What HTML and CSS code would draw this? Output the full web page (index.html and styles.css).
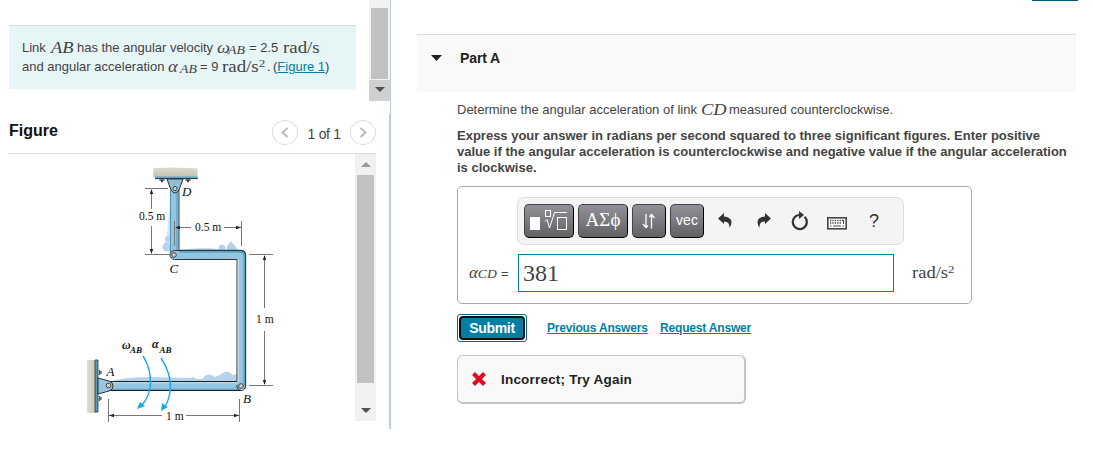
FILE: index.html
```html
<!DOCTYPE html>
<html lang="en">
<head>
<meta charset="utf-8">
<title>Part A</title>
<link rel="stylesheet" href="styles.css">
</head>
<body>
<div class="app">
  <aside class="left">
    <section class="problem">
      <div class="prompt">
        <div class="line"><span class="w29">Link</span><span class="math w26">AB</span><span class="w140">has the angular velocity</span><span class="math w10">ω</span><span class="math sub w22">AB</span><span class="w34">= 2.5</span><span class="rad">rad/s</span></div>
        <div class="line"><span class="w146">and angular acceleration</span><span class="math w12">α</span><span class="math sub w20">AB</span><span class="w22b">= 9</span><span class="rad w45">rad/s<sup>2</sup></span><span class="w6">.</span><span>(<a href="#">Figure 1</a>)</span></div>
      </div>
      <div class="bar bar-top"><div class="thumb"></div><div class="arrow"><svg width="10" height="5"><path d="M0 0H10L5 5Z" fill="#505050"/></svg></div></div>
    </section>
    <section class="figure">
      <header class="fighead">
        <h2>Figure</h2>
        <button class="round"><svg width="10" height="12"><path d="M7.500 1L2.500 5.500L7.500 10" fill="none" stroke="#bbb" stroke-width="2"/></svg></button>
        <span class="count">1 of 1</span>
        <button class="round"><svg width="10" height="12"><path d="M2.500 1L7.500 5.500L2.500 10" fill="none" stroke="#bbb" stroke-width="2"/></svg></button>
      </header>
      <div class="figbody">
        <svg class="diagram" width="346" height="275" viewBox="9 154 346 275">
          <defs>
            <linearGradient id="wall" x1="0" x2="0" y1="0" y2="1"><stop offset="0" stop-color="#dedccf"/><stop offset="1" stop-color="#c4c2b2"/></linearGradient>
            <linearGradient id="wall2"><stop offset="0" stop-color="#e0ded2"/><stop offset="1" stop-color="#c8c6b7"/></linearGradient>
          </defs>
          <g fill="#b5d3ef">
            <path d="M171 190L167 235Q166 241 163 248Q162 251 171 252Z" opacity=".6"/>
            <circle cx="168" cy="239" r="3"/><circle cx="167" cy="247" r="4.500"/>
            <path d="M180 250Q201 247 218 249L219 251H180Z"/><circle cx="222" cy="248" r="3.300"/><path d="M226 251L227 246L231 241L236 247L238 251Z"/>
            <path d="M112 381Q125 377 150 377L190 378L194 377L196 379L202 379Q208 371 215 377L220 375Q227 368 233 375L237 374V381Z"/>
          </g>
          <path d="M153.500 168Q175 167 197.500 168.500V177H153Z" fill="url(#wall)"/>
          <rect x="155" y="176.500" width="42.500" height="2.500" fill="#5ba9cb"/><path d="M155 178.600H198" stroke="#333"/>
          <path d="M159.500 180H164.500M161 181.500H163M185.500 180H190.500M187 181.500H189" stroke="#444" stroke-width="1.500"/>
          <path d="M170.500 190V255H179V190Z" fill="#95c5df"/><path d="M170.500 190V253M177 190V251" stroke="#4f94b4"/><path d="M179 190V251" stroke="#344d59"/>
          <path d="M167 179L171 190Q175 196 179 190L183 179Z" fill="#8fbfd9" stroke="#333"/>
          <path d="M175 250.500H241Q245.500 251 245.500 255V389H237.500V259.500H175A4.300 4.300 0 0 1 175 250.500Z" fill="#95c5df"/>
          <path d="M179 250.500H241Q245.500 251 245.500 255V386" fill="none" stroke="#263f49" stroke-width="1.300"/>
          <path d="M179 252H240Q244 252 244 256V386" fill="none" stroke="#36a0c0"/>
          <path d="M175 259.500H237V387" fill="none" stroke="#333"/>
          <path d="M238.300 260V385" stroke="#d6e7f1"/>
          <rect x="109" y="381" width="132" height="9" fill="#95c5df"/><path d="M109 381.500H237M109 390.500H241" stroke="#222" stroke-width="1.200"/><path d="M109 382.800H237" stroke="#c6e0ee"/><path d="M112 389.300H238" stroke="#4d9ab9"/>
          <rect x="87" y="360" width="8.500" height="53" fill="url(#wall2)"/>
          <path d="M95 360H98V412H95Z" fill="#4e9ec0" stroke="#333" stroke-width=".8"/>
          <path d="M98 378L109 381Q113 382 113 386Q113 390 109 391L98 394Z" fill="#95c5df" stroke="#333"/>
          <path d="M99.500 370V375M101 371V374M99.500 396V401M101 397V400" stroke="#555" stroke-width="1.300"/>
          <path d="M179 250.500H174.500A4.500 4.500 0 0 0 174.500 259.500M237 385V387Q238 390.500 241 390.500Q245.500 390 245.500 386" fill="none" stroke="#333"/>
          <g fill="#d2d2d2" stroke="#444"><circle cx="175" cy="188.500" r="2.100"/><circle cx="174" cy="255" r="2.300"/><circle cx="108.500" cy="385.500" r="2.300"/><circle cx="241" cy="386" r="2.300"/></g>
          <g stroke="#777" fill="none"><path d="M145 188.500H168M145 254.500H170M151.500 190V209M151.500 226V253M174.500 221V246M176 227.500H191M224 227.500H241M241.500 221V246M249 254.500H273M264.500 256V308M264.500 331V384M249 385.500H273M108.500 399V422M239.500 399V422M109 415.500H162M186 415.500H239"/></g>
          <g fill="#222"><path d="M151.500 189L149.800 194H153.200ZM151.500 254L149.800 249H153.200ZM175 227.500L180 225.800V229.200ZM241 227.500L236 225.800V229.200ZM264.500 255L262.800 260H266.200ZM264.500 385L262.800 380H266.200ZM109 415.500L114 413.800V417.200ZM239 415.500L234 413.800V417.200Z"/></g>
          <g fill="none" stroke="#14aae5" stroke-width="1.400"><path d="M143 356Q151 368 150.500 385Q149 398 141 406"/><path d="M161 358Q171 373 170.500 389Q169 401 164 408"/></g>
          <path d="M137 409L140 402L145 406ZM161 411L162 403L168 407Z" fill="#14aae5"/>
          <g class="dlabel"><text x="139" y="220">0.5 m</text><text x="195" y="231">0.5 m</text><text x="256" y="323">1 m</text><text x="166" y="419.500">1 m</text></g>
          <g class="dital"><text x="182" y="196">D</text><text x="169.500" y="272.500">C</text><text x="106.500" y="375.500">A</text><text x="243" y="402.500">B</text><text class="bold" x="122" y="349">ω</text><text class="bold" x="152" y="348">α</text><text class="dsub" x="130" y="352.500">AB</text><text class="dsub" x="159.500" y="352.500">AB</text></g>
        </svg>
        <div class="bar bar-fig"><div class="arrow up"><svg width="10" height="5"><path d="M0 5H10L5 0Z" fill="#9a9a9a"/></svg></div><div class="thumb"></div><div class="arrow down"><svg width="10" height="5"><path d="M0 0H10L5 5Z" fill="#505050"/></svg></div></div>
      </div>
    </section>
  </aside>
  <main class="right">
    <div class="toplink"></div>
    <header class="part"><svg width="11" height="6"><path d="M0 0H11L5.500 6Z" fill="#222"/></svg><h2>Part A</h2></header>
    <div class="content">
      <p class="question"><span class="w243">Determine the angular acceleration of link</span><span class="math w29b">CD</span><span>measured counterclockwise.</span></p>
      <p class="instruct">Express your answer in radians per second squared to three significant figures. Enter positive<br>value if the angular acceleration is counterclockwise and negative value if the angular acceleration<br>is clockwise.</p>
      <div class="answer">
        <div class="tools">
          <button class="tool wide"><svg width="38" height="24"><rect x="0" y="8" width="10" height="13" fill="#fff"/><g fill="none" stroke="#fff"><rect x="15.500" y="1.500" width="5" height="6"/><path d="M15 12.500L17 10.500L19.500 19L24.500 3.500H37"/><rect x="27.500" y="8.500" width="9" height="12"/></g></svg></button>
          <button class="tool wide greek">ΑΣϕ</button>
          <button class="tool"><svg width="14" height="18"><path d="M4 2V15M1 12L4 15.500L6 13.500M9.500 16.500V3M7.500 5L9.500 2.500L12.500 6" fill="none" stroke="#fff" stroke-width="1.300"/></svg></button>
          <button class="tool vec">vec</button>
          <svg class="icon undo" width="15" height="16"><path d="M0 5.500L6 0V3.500Q13 4 13.500 9Q13.500 12 11.500 15Q12 8.500 6 8.500V11Z" fill="#333"/></svg>
          <svg class="icon redo" width="15" height="16"><path d="M14 5.500L8 0V3.500Q1 4 .5 9Q.5 12 2.500 15Q2 8.500 8 8.500V11Z" fill="#333"/></svg>
          <svg class="icon reset" width="18" height="20"><path d="M13.500 5.800A7 7 0 1 1 9 4" fill="none" stroke="#333" stroke-width="2.200"/><path d="M8 0L13 4L8 8Z" fill="#333"/></svg>
          <svg class="icon keys" width="20" height="13"><rect x=".8" y=".8" width="18.400" height="11" fill="#fff" stroke="#444" stroke-width="1.600"/><path d="M3 3.500H17M3 6H15" stroke="#444" stroke-width="1.500" stroke-dasharray="1.300 1.100"/><path d="M3 9H4.500M6 9H14M15.500 9H17M16.500 3V7" stroke="#444"/></svg>
          <span class="help">?</span>
        </div>
        <div class="entry"><span class="math lhs">α<small>CD</small></span><span class="eq">=</span><div class="field">381</div><span class="unit">rad/s<sup>2</sup></span></div>
      </div>
      <div class="actions"><button class="submit"><span>Submit</span></button><a class="prev" href="#">Previous Answers</a><a class="req" href="#">Request Answer</a></div>
      <div class="feedback"><svg width="14" height="14"><path d="M3 3L11 11M11 3L3 11" stroke="#e00a24" stroke-width="4.200" stroke-linecap="square"/></svg><span>Incorrect; Try Again</span></div>
    </div>
  </main>
</div>
</body>
</html>
```
FILE: styles.css
```css
*{box-sizing:border-box}
body{margin:0;width:1093px;height:456px;overflow:hidden;background:#fff;color:#444;font-family:"Liberation Sans",Arial,sans-serif;font-size:13px}
button{font:inherit;margin:0;padding:0}
h2,p{margin:0}
a{color:#007fa3}
svg{display:block;flex:none}
.app{display:flex;height:456px}
.left{width:391px;height:429px;flex:none;background:linear-gradient(#b8cde0,#b8cde0) right top/1px 114px no-repeat,linear-gradient(#b8cde0,#b8cde0) right bottom/2px 315px no-repeat}
.problem{display:flex;justify-content:space-between;padding:0 1px 0 9px;height:101px}
.prompt{width:347px;height:64px;margin-top:25px;padding:12px 0 0 13px;background:#e6f5f6;border-top:1px solid #d5dfdf}
.line{display:flex;height:19px;line-height:19px;white-space:nowrap}
.line>span{flex:none}
.math{font-family:"Liberation Serif",serif;font-style:italic;font-size:16px;transform:scaleX(1.15);transform-origin:left}
.math.sub{font-size:12px;padding-top:3px}
.rad{font-family:"Liberation Serif",serif;font-size:16px;transform:scaleX(1.18);transform-origin:left}
sup{font-size:11px;line-height:0;vertical-align:5px}
.w29{width:29px}.w26{width:26px}.w140{width:140px;letter-spacing:-.02px}.w10{width:11px}.w22{width:21px}.w34{width:34px}
.w146{width:146px}.w12{width:12px}.w20{width:20px}.w22b{width:22px}.w45{width:45px}.w6{width:6px}
.bar{display:flex;flex-direction:column;align-items:center;width:21px;background:#f1f1f1}
.thumb{width:17px;background:#c1c1c1;flex:1}
.arrow{display:flex;align-items:center;justify-content:center;width:21px;height:21px}
.bar-top{padding-top:8px}
.bar-top .arrow{background:#d0d0d0;margin-top:1px;padding-bottom:2px}
.figure{padding:19px 15px 0 9px}
.fighead{display:flex;align-items:center;height:34px;padding-bottom:8px;border-bottom:1px solid #ddd}
.fighead h2{font-size:16px;color:#111;width:263px;margin-top:-3px;line-height:20px}
.round{display:flex;align-items:center;justify-content:center;width:26px;height:25px;border:1px solid #ddd;border-radius:50%;background:#fff}
.count{font-size:14px;letter-spacing:-.7px;word-spacing:1px;width:52px;text-align:center;padding-top:2px}
.figbody{display:flex;height:275px}
.bar-fig{height:267px}
.down{margin-top:17px}
.dlabel,.dital{font-family:"Liberation Serif",serif;fill:#111}
.dlabel{font-size:11.500px}
.dital{font-style:italic;font-size:13px}
.dsub{font-size:9px;font-weight:bold}
.bold{font-weight:bold;font-size:12px}
.right{flex:1;padding-left:26px}
.toplink{height:34px;margin-left:615px;width:46px;border-top:1px solid #005a70}
.part{display:flex;width:659px;height:58px;padding:20px 0 0 14px;background:#f9f9f9;border-top:1px solid #d9dddd}
.part h2{font-size:14px;line-height:16px;color:#222;margin:-5px 0 0 18px;letter-spacing:-.1px}
.content{padding-left:40px}
.question{display:flex;height:19px;line-height:19px;margin-top:8px;white-space:nowrap}
.w243{width:244px}.w29b{width:28px}
.instruct{font-weight:bold;line-height:16px;margin-top:9px;white-space:nowrap}
.answer{width:515px;height:118px;margin-top:10px;padding:10px 0 0 11px;border:1px solid #aaa;border-radius:5px}
.tools{display:flex;width:387px;height:48px;margin-left:48px;padding:6px 0 0 6px;border:1px solid #ddd;border-radius:7px;background:#f4f4f4}
.tool{display:flex;align-items:center;justify-content:center;flex:none;width:34px;height:34px;margin-right:4px;border:1px solid #000;border-left-color:#444;border-top-color:#444;border-radius:5px;background:linear-gradient(#92919a,#626264);color:#fff}
.wide{width:50px}
.greek{font-family:"Liberation Serif",serif;font-size:19px;padding-bottom:3px}
.vec{font-size:14px;padding-bottom:3px}
.icon{margin-top:9px}
.undo{margin-left:10px}
.redo{margin-left:24px}
.reset{margin:7px 0 0 19px}
.keys{margin:13px 0 0 18px}
.help{font-size:18px;margin:6px 0 0 22px;line-height:22px;color:#333}
.entry{display:flex;margin-top:9px;height:38px;align-items:center}
.lhs{width:32px;transform:scaleX(1.05)}
.lhs small{font-size:13px}
.eq{width:17px}
.field{width:376px;height:38px;border:1px solid #007fa3;padding-left:4px;font:24px/36px "Liberation Serif",serif}
.unit{font:16px "Liberation Serif",serif;margin-left:18px;transform:scaleX(1.16);transform-origin:left}
.actions{display:flex;margin-top:10px;height:28px;align-items:center;font-weight:bold;font-size:12px;letter-spacing:-.18px}
.submit{width:70px;height:28px;border:1px solid #006a88;border-radius:3px;background:#fff;padding:1px;letter-spacing:-.3px}
.submit span{display:block;height:24px;border:2px solid #111;border-radius:4px;background:#007fa3;color:#fff;font-weight:bold;font-size:14px;line-height:20px}
.prev{margin-left:20px;width:113px}
.feedback{display:flex;align-items:center;width:289px;height:49px;margin-top:13px;padding-left:14px;border:1px solid #c4c4c4;border-right-width:2px;border-bottom-width:2px;border-radius:6px;background:#f9f9f9;font-weight:bold;font-size:13.500px;letter-spacing:.2px;color:#222}
.feedback span{margin-left:15px;padding-top:1px}
```
